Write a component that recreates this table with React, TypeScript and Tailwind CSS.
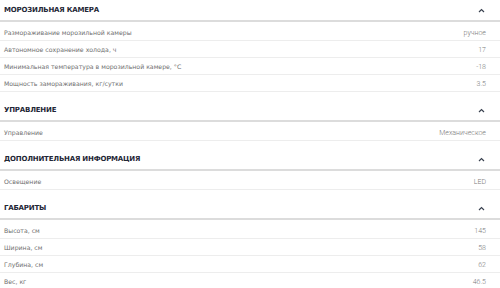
const sections: { title: string; rows: [string, string][] }[] = [
    {
        title: 'МОРОЗИЛЬНАЯ КАМЕРА',
        rows: [
            ['Размораживание морозильной камеры', 'ручное'],
            ['Автономное сохранение холода, ч', '17'],
            ['Минимальная температура в морозильной камере, °C', '-18'],
            ['Мощность замораживания, кг/сутки', '3.5'],
        ],
    },
    { title: 'УПРАВЛЕНИЕ', rows: [['Управление', 'Механическое']] },
    { title: 'ДОПОЛНИТЕЛЬНАЯ ИНФОРМАЦИЯ', rows: [['Освещение', 'LED']] },
    {
        title: 'ГАБАРИТЫ',
        rows: [
            ['Высота, см', '145'],
            ['Ширина, см', '58'],
            ['Глубина, см', '62'],
            ['Вес, кг', '46.5'],
        ],
    },
];

function Chevron() {
    return (
        <svg width="7" height="5" viewBox="0 0 7 5" className="text-[#3a4250]">
            <polyline points="1,4 3.5,1.5 6,4" fill="none" stroke="currentColor" strokeWidth="1.2" />
        </svg>
    );
}

export default function App() {
    return (
        <div className="w-[500px] h-[288px] overflow-hidden bg-white font-['DejaVu_Sans',sans-serif]">
            {sections.map((s, i) => (
                <div key={s.title} className={i > 0 ? 'mt-[8px]' : ''}>
                    <div className="flex items-center justify-between h-[22px] pl-[4px] pr-[15px] border-b-2 border-[#dcdcdc]">
                        <span className="text-[7px] font-bold text-[#1f2736] tracking-[-0.2px]">{s.title}</span>
                        <Chevron />
                    </div>
                    <div className="pt-[2px]">
                        {s.rows.map(([label, value]) => (
                            <div key={label} className="flex items-center justify-between h-[17px] pt-[2px] pl-[4px] pr-[14px] border-b border-[#ededed]">
                                <span className="text-[6.2px] text-[#6f6f6f]">{label}</span>
                                <span className="text-[7px] text-[#7a7a7a] font-['Roboto',sans-serif] font-light">{value}</span>
                            </div>
                        ))}
                    </div>
                </div>
            ))}
        </div>
    );
}
